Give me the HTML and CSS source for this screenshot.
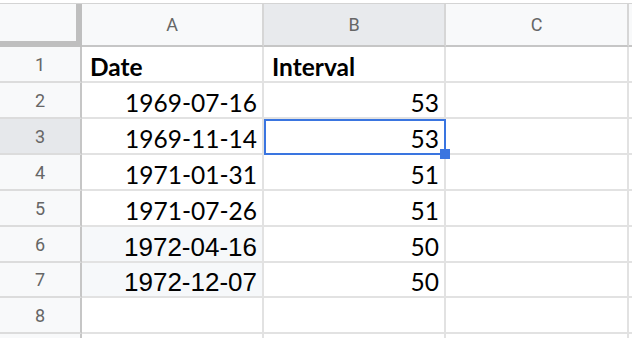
FILE: index.html
```html
<!DOCTYPE html>
<html>
<head>
<meta charset="utf-8">
<link rel="stylesheet" href="styles.css">
</head>
<body>
<div class="sheet">
  <div class="corner"></div>
  <div class="colhead">A</div>
  <div class="colhead sel">B</div>
  <div class="colhead">C</div>
  <div class="colhead last"></div>

  <div class="rowhead">1</div>
  <div class="cell bold">Date</div>
  <div class="cell bold">Interval</div>
  <div class="cell"></div>
  <div class="cell last"></div>

  <div class="rowhead">2</div>
  <div class="cell num">1969-07-16</div>
  <div class="cell num">53</div>
  <div class="cell"></div>
  <div class="cell last"></div>

  <div class="rowhead sel">3</div>
  <div class="cell num">1969-11-14</div>
  <div class="cell num active">53<span class="handle"></span></div>
  <div class="cell"></div>
  <div class="cell last"></div>

  <div class="rowhead">4</div>
  <div class="cell num">1971-01-31</div>
  <div class="cell num">51</div>
  <div class="cell"></div>
  <div class="cell last"></div>

  <div class="rowhead">5</div>
  <div class="cell num">1971-07-26</div>
  <div class="cell num">51</div>
  <div class="cell"></div>
  <div class="cell last"></div>

  <div class="rowhead">6</div>
  <div class="cell num alt">1972-04-16</div>
  <div class="cell num">50</div>
  <div class="cell"></div>
  <div class="cell last"></div>

  <div class="rowhead">7</div>
  <div class="cell num alt">1972-12-07</div>
  <div class="cell num">50</div>
  <div class="cell"></div>
  <div class="cell last"></div>

  <div class="rowhead">8</div>
  <div class="cell"></div>
  <div class="cell"></div>
  <div class="cell"></div>
  <div class="cell last"></div>

  <div class="rowhead"></div>
  <div class="cell"></div>
  <div class="cell"></div>
  <div class="cell"></div>
  <div class="cell last"></div>
</div>
</body>
</html>
```

FILE: styles.css
```css
* { box-sizing: border-box; }
html, body { margin: 0; padding: 0; background: #ffffff; overflow: hidden; }
body { padding-top: 3px; }

.sheet {
  display: grid;
  grid-template-columns: 82px 182px 182px 183px 1fr;
  grid-template-rows: 43px 36px 36px 36px 36px 36px 36px 35px 36px 36px;
  border-top: 1px solid #d4d4d4;
}

.corner {
  background: #f8f9fa;
  border-right: 6px solid #bfbfbf;
  border-bottom: 6px solid #bfbfbf;
}

.colhead {
  background: #f8f9fa;
  border-right: 2px solid #d6d6d6;
  border-bottom: 2px solid #c6c6c6;
  display: flex;
  align-items: center;
  justify-content: center;
  font-family: Roboto, "Liberation Sans", sans-serif;
  font-size: 18px;
  color: #666666;
  padding-bottom: 1px;
}
.colhead.sel { background: #e8eaed; }
.colhead.last { border-right: none; }

.rowhead {
  background: #f8f9fa;
  border-right: 2px solid #c6c6c6;
  border-bottom: 2px solid #dcdcdc;
  display: flex;
  align-items: center;
  justify-content: center;
  font-family: Roboto, "Liberation Sans", sans-serif;
  font-size: 18px;
  color: #666666;
}
.rowhead.sel { background: #e6e8eb; }

.cell {
  border-right: 2px solid #e2e2e2;
  border-bottom: 2px solid #e2e2e2;
  display: flex;
  align-items: flex-end;
  padding: 0 5px 2px 8px;
  font-family: Lato, "Liberation Sans", sans-serif;
  font-size: 24.5px;
  line-height: 25px;
  color: #000000;
  white-space: nowrap;
}
.cell.last { border-right: none; }
.cell.bold { font-weight: 700; }
.cell.num { justify-content: flex-end; }
.cell.alt {
  background: #f6f8fa;
  font-family: "Liberation Sans", Arial, sans-serif;
  font-size: 26px;
  padding-bottom: 1px;
}

.cell.active { position: relative; }
.cell.active::after {
  content: "";
  position: absolute;
  top: 0;
  left: 0;
  right: -2px;
  bottom: -2px;
  border: 2px solid #3a75e0;
  pointer-events: none;
}
.handle {
  position: absolute;
  right: -6px;
  bottom: -6px;
  width: 10px;
  height: 10px;
  background: #3a75e0;
  z-index: 2;
}
```
